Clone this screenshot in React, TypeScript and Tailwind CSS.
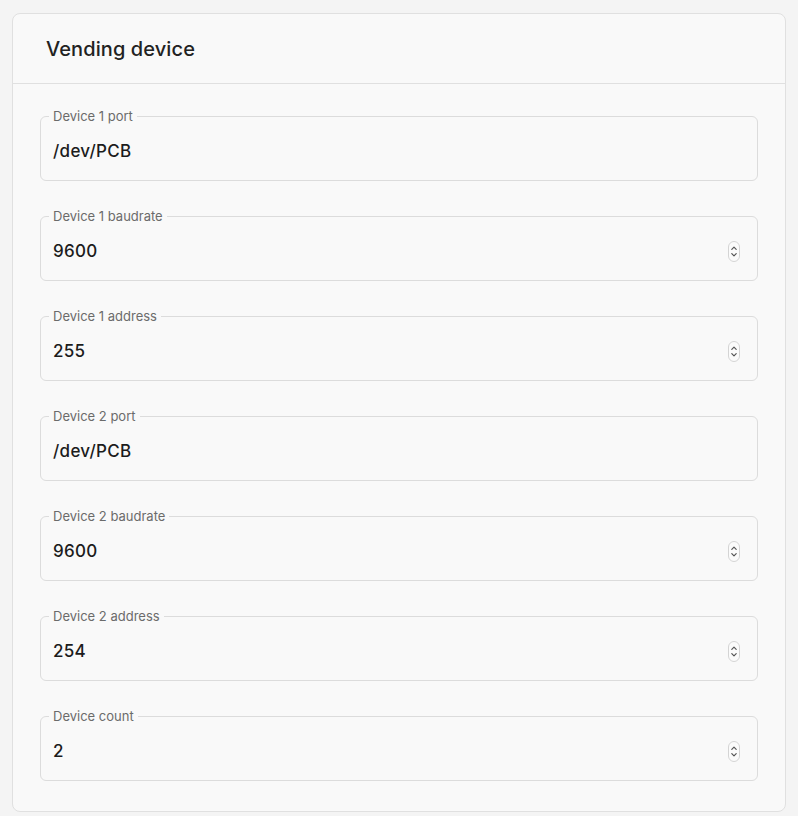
import React from "react";

type Field = { label: string; value: string; numeric: boolean };

const fields: Field[] = [
  { label: "Device 1 port", value: "/dev/PCB", numeric: false },
  { label: "Device 1 baudrate", value: "9600", numeric: true },
  { label: "Device 1 address", value: "255", numeric: true },
  { label: "Device 2 port", value: "/dev/PCB", numeric: false },
  { label: "Device 2 baudrate", value: "9600", numeric: true },
  { label: "Device 2 address", value: "254", numeric: true },
  { label: "Device count", value: "2", numeric: true },
];

function Spinner() {
  return (
    <svg width="12" height="21" viewBox="0 0 12 21" fill="none">
      <rect x="0.5" y="0.5" width="11" height="20" rx="5.5" stroke="#d4d4d4" fill="#fbfbfb" />
      <path d="M3.8 8.3 L6 6.1 L8.2 8.3" stroke="#555" strokeWidth="1.2" strokeLinecap="round" strokeLinejoin="round" />
      <path d="M3.8 12.7 L6 14.9 L8.2 12.7" stroke="#555" strokeWidth="1.2" strokeLinecap="round" strokeLinejoin="round" />
    </svg>
  );
}

export default function App() {
  return (
    <div
      className="min-h-[816px] w-full bg-[#f4f4f4] px-3 pt-[13px]"
      style={{ fontFamily: "Inter, 'Noto Sans', sans-serif" }}
    >
      <div className="rounded-lg border border-[#e0e0e0] bg-[#f9f9f9]">
        <div className="flex h-[70px] items-center border-b border-[#e0e0e0] px-[33px]">
          <h1 className="text-[20px] font-medium tracking-[0.1px] text-[#222]">Vending device</h1>
        </div>
        <div className="flex flex-col gap-[27px] px-[27px] pb-[30px] pt-6">
          {fields.map((f) => (
            <fieldset
              key={f.label}
              className="m-0 rounded-md border border-[#dcdcdc] pb-[17px] pl-2 pr-[17px] pt-[15px]"
            >
              <legend className="px-1 text-[13px] leading-4 text-[#6b6b6b]">{f.label}</legend>
              <div className="flex h-6 items-center justify-between pl-1">
                <span className="text-[17px] font-medium leading-6 tracking-[0.3px] text-[#1c1c1c]">{f.value}</span>
                {f.numeric && <Spinner />}
              </div>
            </fieldset>
          ))}
        </div>
      </div>
    </div>
  );
}
